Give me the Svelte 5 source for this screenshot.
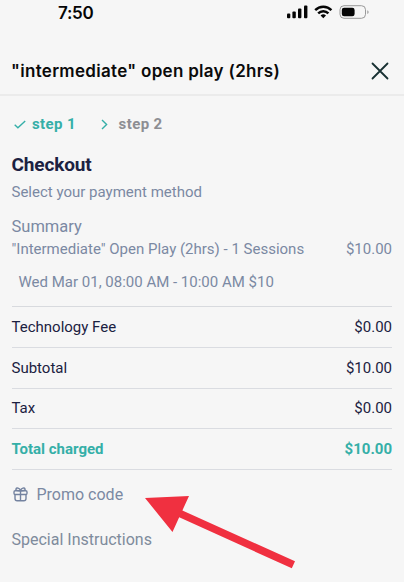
<script>
  const sessionName = '"Intermediate" Open Play (2hrs)'

  const rows = [
    { label: 'Technology Fee', amount: '$0.00' },
    { label: 'Subtotal', amount: '$10.00' },
    { label: 'Tax', amount: '$0.00' },
    { label: 'Total charged', amount: '$10.00', total: true }
  ]
</script>

<div class="screen">
  <div class="status-bar">
    <span class="time">7:50</span>
    <svg class="status-icons" width="84" height="16" viewBox="0 0 84 16" aria-hidden="true">
      <rect x="1" y="9.4" width="3.3" height="4.8" rx="1" />
      <rect x="6.4" y="7.4" width="3.4" height="6.8" rx="1" />
      <rect x="12" y="4.4" width="3.4" height="9.8" rx="1" />
      <rect x="18" y="1.4" width="3.4" height="12.8" rx="1" />
      <g fill="none" stroke="#050505" stroke-width="2.4">
        <path d="M29.2 6.2a11.3 11.3 0 0 1 16.2 0" />
        <path d="M32.2 9.4a7.1 7.1 0 0 1 10.2 0" />
      </g>
      <path d="M34.6 11.4a4.1 4.1 0 0 1 5.4 0l-2.7 2.9z" />
      <rect x="54" y="1.7" width="25.5" height="12.6" rx="4" fill="none" stroke="#999" />
      <rect x="55.8" y="3.7" width="12.8" height="8.6" rx="2.3" />
      <path d="M81.3 6.2c1.8.7 1.8 3.2 0 3.9z" fill="#999" />
    </svg>
  </div>

  <header>
    <h1>"intermediate" open play (2hrs)</h1>
    <button class="close" aria-label="Close">
      <svg width="18" height="18" viewBox="0 0 18 18">
        <path d="M1.5 1.5l15 15M16.5 1.5l-15 15" />
      </svg>
    </button>
  </header>

  <main>
    <nav class="steps">
      <svg width="12" height="9" viewBox="0 0 12 9" aria-hidden="true">
        <path d="M.7 4.7l3.2 3L11.2.9" />
      </svg>
      <span class="step done">step 1</span>
      <svg class="chevron" width="7" height="11" viewBox="0 0 7 11" aria-hidden="true">
        <path d="M1 1l4.6 4.5L1 10" />
      </svg>
      <span class="step">step 2</span>
    </nav>

    <h2>Checkout</h2>
    <p class="hint">Select your payment method</p>

    <section class="summary">
      <h3>Summary</h3>
      <div class="item">
        <span>{sessionName} - 1 Sessions</span>
        <span>$10.00</span>
      </div>
      <div class="date">Wed Mar 01, 08:00 AM - 10:00 AM $10</div>
    </section>

    {#each rows as row}
      <div class="row" class:total={row.total}>
        <span>{row.label}</span>
        <span>{row.amount}</span>
      </div>
    {/each}

    <div class="promo">
      <svg width="15" height="15" viewBox="0 0 15 15" aria-hidden="true">
        <rect x="1" y="3.8" width="13" height="3.7" rx="1.2" />
        <path d="M2 7.5v4q0 2.2 2.2 2.2h6.6q2.2 0 2.2-2.2v-4M7.5 3.8v9.9M7.5 3.8C3.8 4 2.6 3.2 3 1.9S6.7.4 7.5 3.8C8.3.4 11.6.6 12 1.9S11.2 4 7.5 3.8" />
      </svg>
      <span>Promo code</span>
    </div>
    <div class="instructions">Special Instructions</div>
  </main>

  <svg class="arrow" width="150" height="74" viewBox="0 0 150 74" aria-hidden="true">
    <path d="M0 3L44 1l-6.6 14.4L150 66.3l-3.2 7L34.2 22.2 27.5 37z" />
  </svg>
</div>

<style>
  :global(body) {
    background: #f6f6f6;
  }

  .screen {
    position: relative;
    height: 582px;
    overflow: hidden;
    background: #f6f6f6;
    color: #1b2141;
    font-family: Roboto, sans-serif;
    font-size: 15px;
  }

  .status-bar {
    display: flex;
    justify-content: space-between;
    height: 48px;
    padding: 4px 34px 0 58px;
    box-sizing: border-box;
  }

  .time {
    color: #050505;
    font: 600 17px/18px Inter, sans-serif;
    letter-spacing: -0.3px;
  }

  .status-icons {
    fill: #050505;
  }

  header {
    display: flex;
    align-items: center;
    justify-content: space-between;
    height: 48px;
    padding: 0 15px 0 11px;
    border-bottom: 2px solid #ebebeb;
    box-sizing: border-box;
  }

  h1,
  h2,
  h3,
  p {
    margin: 0;
  }

  h1 {
    color: #0a0a0a;
    font: 600 17px/24px Inter, sans-serif;
    letter-spacing: 0.3px;
  }

  .close {
    display: flex;
    padding: 0;
    border: 0;
    background: none;
  }

  .close path {
    stroke: #173032;
    stroke-width: 1.8;
    stroke-linecap: round;
  }

  main {
    padding: 0 12px 0 11.5px;
  }

  .steps {
    display: flex;
    align-items: center;
    height: 20px;
    padding: 18px 0 0 2px;
  }

  .steps path {
    fill: none;
    stroke: #35afa8;
    stroke-width: 1.4;
  }

  .step {
    margin-left: 6.5px;
    color: #8d8e93;
    font-size: 15px;
    font-weight: 700;
    letter-spacing: 0.4px;
  }

  .step.done {
    color: #35afa8;
  }

  .chevron {
    margin: 0 4px 0 25px;
  }

  h2 {
    margin-top: 18px;
    font-size: 19px;
    font-weight: 700;
    line-height: 26px;
    letter-spacing: -0.15px;
  }

  .hint {
    margin-top: 4px;
    color: #7b89a3;
    line-height: 20px;
  }

  .summary {
    height: 89px;
    margin-top: 15px;
    border-bottom: 1px solid #d8dade;
    color: #7b89a3;
  }

  h3 {
    font-size: 16.5px;
    font-weight: 400;
    line-height: 20px;
  }

  .item,
  .row {
    display: flex;
    align-items: center;
    justify-content: space-between;
  }

  .item {
    margin-top: 1px;
    line-height: 22px;
  }

  .date {
    margin: 11px 0 0 7px;
    line-height: 22px;
  }

  .row {
    height: 40.8px;
    border-bottom: 1px solid #dadce1;
    box-sizing: border-box;
  }

  .total {
    color: #35afa8;
    font-weight: 700;
  }

  .promo {
    display: flex;
    align-items: center;
    gap: 9px;
    height: 20px;
    margin-top: 14px;
    padding-left: 1px;
    color: #7b89a3;
    font-size: 16px;
  }

  .promo path,
  .promo rect {
    fill: none;
    stroke: #7483a0;
    stroke-width: 1.4;
  }

  .instructions {
    margin-top: 26px;
    color: #7e8b9c;
    font-size: 16px;
    line-height: 20px;
  }

  /* Callout lies over the page and points at the promo code */
  .arrow {
    position: absolute;
    top: 495px;
    left: 145px;
    fill: #f03040;
  }
</style>
